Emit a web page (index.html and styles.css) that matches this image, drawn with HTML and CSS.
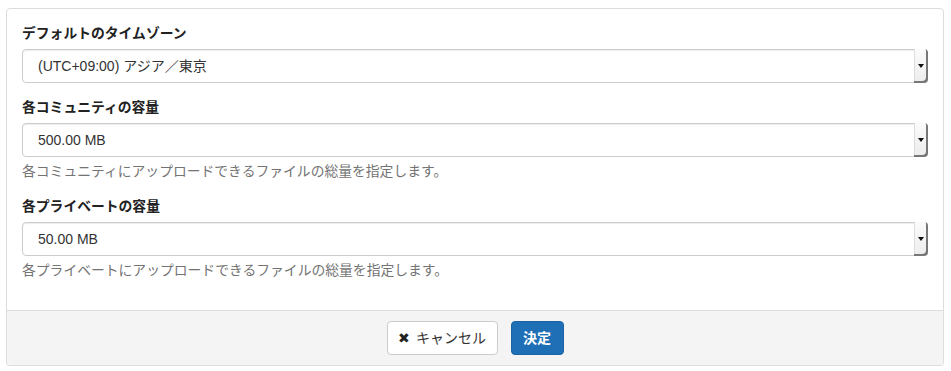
FILE: index.html
```html
<!DOCTYPE html>
<html lang="ja">
<head>
    <meta charset="UTF-8">
    <meta name="viewport" content="width=device-width, initial-scale=1.0">
    <title>設定</title>
    <link rel="stylesheet" href="styles.css">
</head>
<body>
    <div class="panel">
        <div class="panel-body">
            <div class="form-group">
                <label class="control-label">デフォルトのタイムゾーン</label>
                <div class="select">
                    <span class="select-value">(UTC+09:00) アジア／東京</span>
                    <span class="select-arrow"></span>
                </div>
            </div>
            <div class="form-group">
                <label class="control-label">各コミュニティの容量</label>
                <div class="select">
                    <span class="select-value">500.00 MB</span>
                    <span class="select-arrow"></span>
                </div>
                <p class="help-block">各コミュニティにアップロードできるファイルの総量を指定します。</p>
            </div>
            <div class="form-group last">
                <label class="control-label">各プライベートの容量</label>
                <div class="select">
                    <span class="select-value">50.00 MB</span>
                    <span class="select-arrow"></span>
                </div>
                <p class="help-block">各プライベートにアップロードできるファイルの総量を指定します。</p>
            </div>
        </div>
        <div class="panel-footer">
            <button type="button" class="btn btn-default"><span class="icon-times">✖</span>キャンセル</button>
            <button type="submit" class="btn btn-primary">決定</button>
        </div>
    </div>
</body>
</html>
```
FILE: styles.css
```css
body {
    font-family: 'Liberation Sans', 'Noto Sans CJK JP', sans-serif;
    font-size: 14px;
    line-height: 20px;
    color: #333;
    background-color: #fff;
    margin: 0;
    padding: 8px 7px 0 6px;
}
.panel {
    border: 1px solid #ddd;
    border-radius: 4px;
    background: #fff;
    overflow: hidden;
    box-shadow: 0 1px 1px rgba(0, 0, 0, 0.05);
}
.panel-body {
    padding: 15px;
}
.form-group {
    margin-bottom: 15px;
}
.form-group.last {
    margin-bottom: 14px;
}
.control-label {
    display: block;
    font-weight: bold;
    font-size: 13.8px;
    margin-bottom: 5px;
    color: #222;
}
.select {
    display: flex;
    align-items: stretch;
    height: 34px;
    box-sizing: border-box;
    border: 1px solid #ccc;
    border-radius: 4px;
    background: #fff;
    box-shadow: inset 0 1px 1px rgba(0, 0, 0, 0.075);
}
.select-value {
    flex: 1;
    padding-left: 15px;
    line-height: 32px;
    font-size: 14px;
    color: #333;
}
.select-arrow {
    position: relative;
    width: 14px;
    margin: -1px -1px -1px 0;
    background: linear-gradient(#fbfbfb, #ececec);
    border-radius: 0 4px 4px 0;
    box-shadow: inset -2px -2px 0 #777, inset 1px 0 0 #ddd;
}
.select-arrow::after {
    content: '';
    position: absolute;
    left: 4px;
    top: 15px;
    border-left: 3px solid transparent;
    border-right: 3px solid transparent;
    border-top: 4px solid #111;
}
.help-block {
    margin: 5px 0 0 0;
    font-size: 13.8px;
    color: #737373;
}
.panel-footer {
    display: flex;
    justify-content: center;
    gap: 13px;
    padding: 10px 15px;
    background-color: #f4f4f4;
    border-top: 1px solid #ddd;
}
.btn {
    display: flex;
    align-items: center;
    justify-content: center;
    height: 34px;
    box-sizing: border-box;
    padding: 0;
    white-space: nowrap;
    font-family: 'Liberation Sans', 'Noto Sans CJK JP', sans-serif;
    font-size: 14px;
    line-height: 20px;
    border-radius: 4px;
    border: 1px solid transparent;
    cursor: pointer;
}
.btn-default {
    width: 111px;
    background-color: #fff;
    border-color: #ccc;
    color: #333;
}
.icon-times {
    font-size: 14px;
    margin-right: 6px;
    color: #222;
}
.btn-primary {
    width: 53px;
    background-color: #1f6fb6;
    border-color: #1b63a4;
    color: #fff;
    font-weight: bold;
}
```
